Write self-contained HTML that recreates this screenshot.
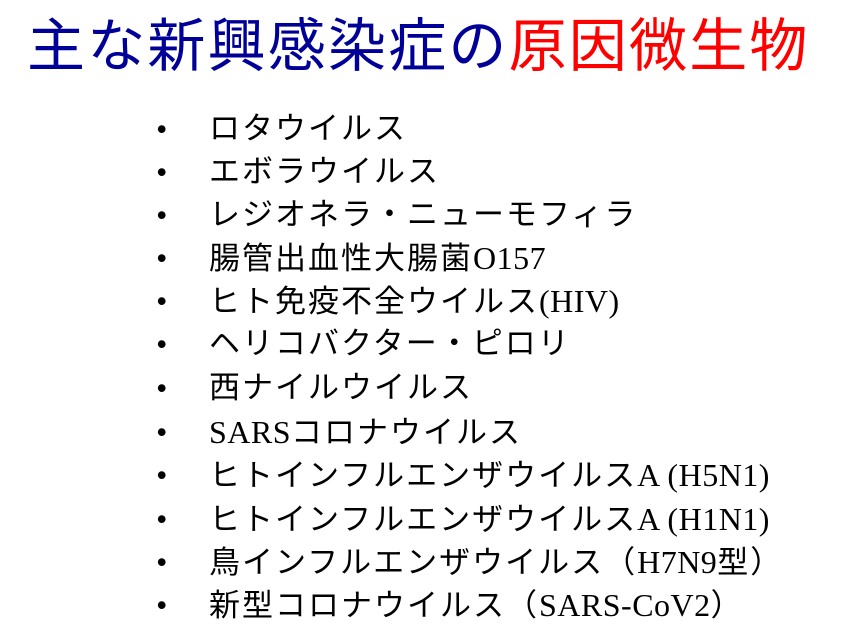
<!DOCTYPE html>
<html><head><meta charset="utf-8"><style>
body{margin:0;width:842px;height:633px;background:#fff;position:relative;overflow:hidden;font-family:"Liberation Serif","Noto Sans CJK JP",serif;}
.t{position:absolute;left:27px;top:7px;font-family:"Liberation Sans","Noto Sans CJK JP",sans-serif;font-size:58px;line-height:80px;color:#000099;white-space:nowrap;letter-spacing:2.2px}
.t span{color:#ff0000}
.r{position:absolute;left:0;height:40px;line-height:40px;font-size:31px;color:#000;white-space:nowrap;letter-spacing:2px}
.r b{position:absolute;left:157px;font-weight:bold;font-family:"Liberation Sans",sans-serif;font-size:27px}
.r i{position:absolute;left:209px;font-style:normal}
.r i s{text-decoration:none;font-size:32px;letter-spacing:0.5px}
</style></head><body>
<div class="t">主な新興感染症の<span>原因微生物</span></div>
<div class="r" style="top:109px"><b>•</b><i>ロタウイルス</i></div>
<div class="r" style="top:152px"><b>•</b><i>エボラウイルス</i></div>
<div class="r" style="top:195px"><b>•</b><i>レジオネラ・ニューモフィラ</i></div>
<div class="r" style="top:238px"><b>•</b><i>腸管出血性大腸菌<s>O157</s></i></div>
<div class="r" style="top:281px"><b>•</b><i>ヒト免疫不全ウイルス<s>(HIV)</s></i></div>
<div class="r" style="top:324px"><b>•</b><i>ヘリコバクター・ピロリ</i></div>
<div class="r" style="top:368px"><b>•</b><i>西ナイルウイルス</i></div>
<div class="r" style="top:412px"><b>•</b><i><s>SARS</s>コロナウイルス</i></div>
<div class="r" style="top:455px"><b>•</b><i>ヒトインフルエンザウイルス<s>A (H5N1)</s></i></div>
<div class="r" style="top:499px"><b>•</b><i>ヒトインフルエンザウイルス<s>A (H1N1)</s></i></div>
<div class="r" style="top:542px"><b>•</b><i>鳥インフルエンザウイルス（<s>H7N9</s>型）</i></div>
<div class="r" style="top:585px"><b>•</b><i>新型コロナウイルス（<s>SARS-CoV2</s>）</i></div>
</body></html>
